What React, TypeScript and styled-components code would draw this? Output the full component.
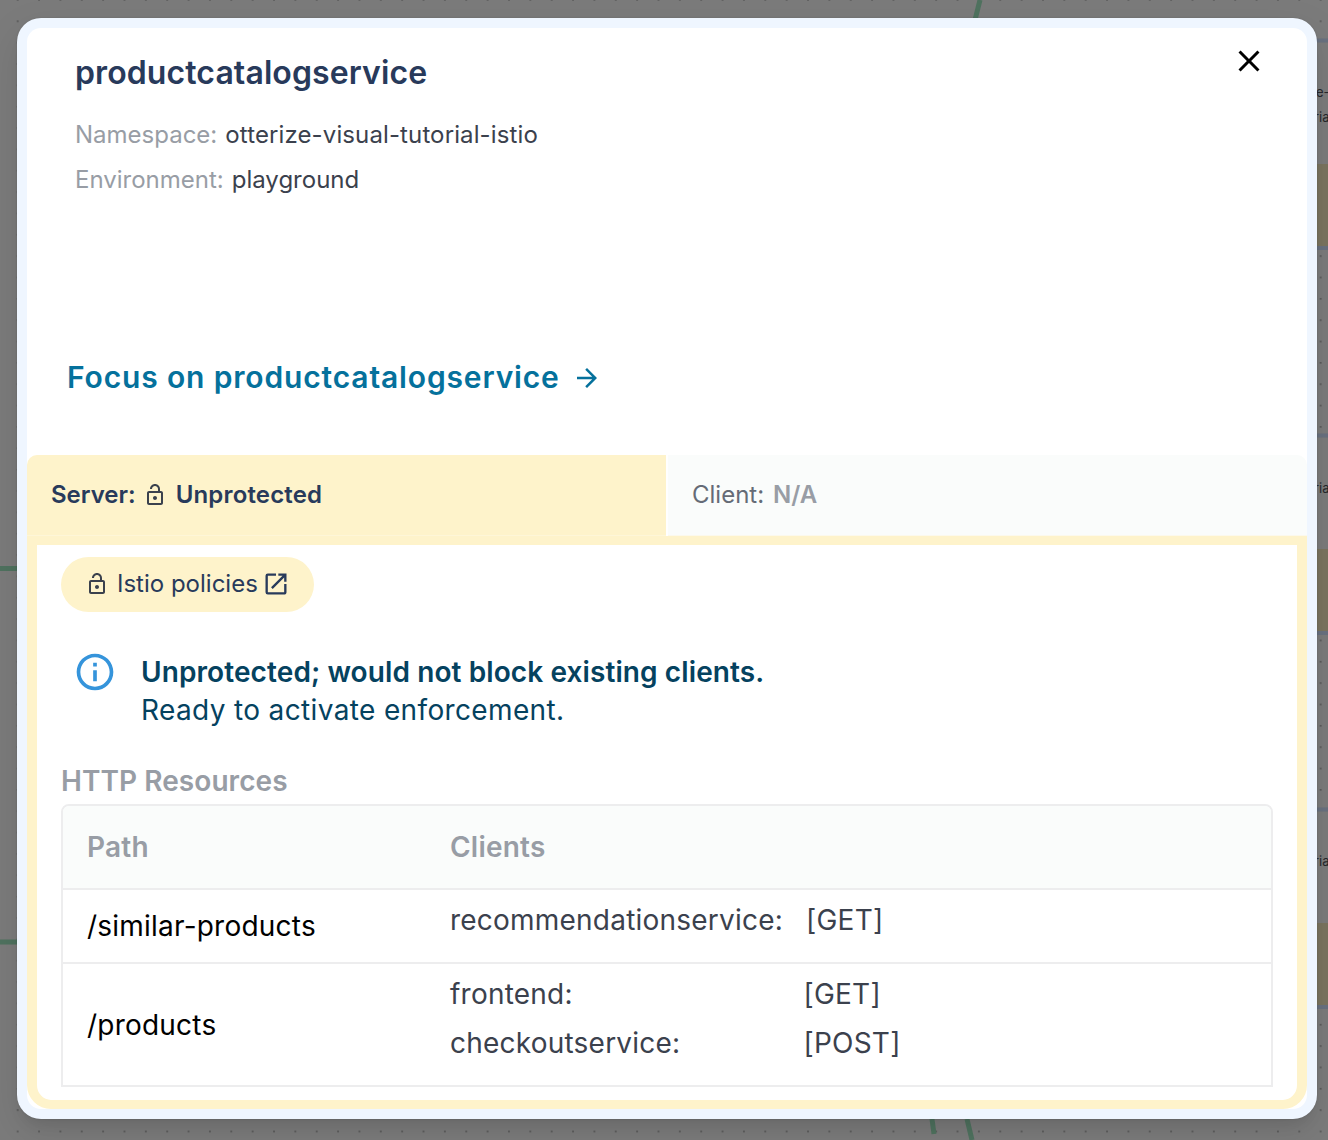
import React from "react";
import styled, { createGlobalStyle } from "styled-components";
import { MdArrowForward, MdClose, MdInfoOutline, MdOpenInNew, MdOutlineLockOpen } from "react-icons/md";

const GlobalStyle = createGlobalStyle`
  * { box-sizing: border-box; }
  body { margin: 0; overflow: hidden; font-family: Inter, "Liberation Sans", sans-serif; }
`;

const Screen = styled.div`
  position: relative;
  width: 1328px;
  height: 1140px;
  padding: 18px 11px 0 17px;
  overflow: hidden;
  background-color: #7b7b7b;
`;

const Canvas = styled.svg`
  position: absolute;
  inset: 0;
`;

const Dialog = styled.main`
  position: relative;
  height: 1101px;
  padding: 10px;
  border-radius: 24px;
  background: #eff6ff;
  box-shadow: 0 11px 15px -7px rgba(0, 0, 0, 0.1), 0 14px 38px 3px rgba(0, 0, 0, 0.08), 0 0 2px rgba(0, 0, 0, 0.15);
`;

const Sheet = styled.div`
  display: flex;
  flex-direction: column;
  height: 1081px;
  border-radius: 14px;
  background: #fff;
  overflow: hidden;
`;

const Header = styled.header`
  display: flex;
  justify-content: space-between;
  height: 427px;
  padding: 0 40px 0 40px;
`;

const Summary = styled.div`
  padding-top: 25px;
`;

const Title = styled.h1`
  margin: 0 0 19px 8px;
  font-size: 32px;
  line-height: 40px;
  font-weight: 600;
  letter-spacing: 0.1px;
  color: #283a5b;
`;

const Meta = styled.div`
  display: flex;
  gap: 8px;
  margin-left: 8px;
  font-size: 24px;
  line-height: 45px;
  color: #3b414d;
`;

const MetaLabel = styled.span`
  color: #989da5;
`;

const MetaValue = styled.span<{ $tracking: number }>`
  letter-spacing: ${(p) => p.$tracking}px;
`;

const FocusLink = styled.a`
  display: flex;
  align-items: center;
  gap: 12px;
  margin-top: 156px;
  font-size: 30px;
  line-height: 40px;
  font-weight: 600;
  letter-spacing: 0.85px;
  color: #05719c;
`;

const FocusLabel = styled.span`
  margin: -1px 0 1px;
`;

const CloseButton = styled.button`
  display: flex;
  height: 36px;
  margin: 15px 0 0;
  padding: 0;
  border: 0;
  background: none;
  color: #000;
`;

const Tabs = styled.nav`
  display: grid;
  grid-template-columns: 639px 1fr;
  gap: 2px;
  height: 81px;
`;

const Tab = styled.div<{ $active?: boolean }>`
  display: flex;
  align-items: center;
  padding: 0 24px 1px;
  border-bottom: 1px solid ${(p) => (p.$active ? "#fef6d8" : "#fcf9ec")};
  border-radius: ${(p) => (p.$active ? "10px 0 0 0" : "0 10px 0 0")};
  background: ${(p) => (p.$active ? "#fef3cb" : "#fafcfb")};
  font-size: 24px;
  font-weight: ${(p) => (p.$active ? 600 : 400)};
  color: ${(p) => (p.$active ? "#283a5b" : "#656b76")};
`;

const Status = styled.span`
  letter-spacing: 0.15px;
`;

const Muted = styled.strong`
  margin-left: 9px;
  font-weight: 600;
  color: #989da5;
`;

const TabIcon = styled.span`
  display: flex;
  margin: 0 9px 0 7px;
  color: #3b414d;
`;

const Panel = styled.section`
  flex: 1;
  padding: 12px 24px 0;
  border: 9px solid #fef3cb;
  border-left-width: 10px;
  border-right-width: 10px;
  border-radius: 0 0 24px 24px;
`;

const PolicyChip = styled.a`
  display: flex;
  align-items: center;
  width: 253px;
  height: 55px;
  padding: 0 24px 1px;
  border-radius: 28px;
  background: #fef3cb;
  font-size: 24px;
  color: #283a5b;
`;

const ChipLabel = styled.span`
  margin: -1px 4px 0 8px;
`;

const Notice = styled.div`
  display: flex;
  gap: 24px;
  margin: 41px 0 0 12px;
  color: #05425f;
  font-size: 28px;
  line-height: 38px;
`;

const NoticeIcon = styled.span`
  display: flex;
  height: 44px;
  margin-top: -3px;
  color: #3594db;
`;

const NoticeTitle = styled.div`
  font-weight: 600;
  letter-spacing: 0.1px;
`;

const NoticeText = styled.div`
  letter-spacing: 0.36px;
`;

const SectionTitle = styled.h2`
  margin: 32px 0 3px;
  font-size: 28px;
  line-height: 40px;
  font-weight: 600;
  letter-spacing: 0.06px;
  color: #989da5;
`;

const Table = styled.div`
  border: 2px solid #ededee;
  border-radius: 8px 8px 0 0;
  overflow: hidden;
`;

const Row = styled.div<{ $height: number; $head?: boolean }>`
  display: grid;
  grid-template-columns: 363px 1fr;
  height: ${(p) => p.$height}px;
  padding-left: 24px;
  font-size: 28px;
  letter-spacing: 0.22px;
  ${(p) => (p.$head
    ? "align-items: center; background: #fafcfb; color: #989da5; font-weight: 600;"
    : "border-top: 2px solid #ededee; color: #3b414d;")}
`;

const Path = styled.div`
  align-self: center;
  color: #000;
`;

const Clients = styled.div`
  padding-top: 6px;
`;

const ClientRow = styled.div`
  display: flex;
  gap: 23px;
  line-height: 49px;
`;

const ClientName = styled.span`
  min-width: 330.5px;
`;

interface Resource {
  path: string;
  height: number;
  clients: [string, string][];
}

const resources: Resource[] = [
  { path: "/similar-products", height: 74, clients: [["recommendationservice:", "[GET]"]] },
  { path: "/products", height: 123, clients: [["frontend:", "[GET]"], ["checkoutservice:", "[POST]"]] },
];

function MetaRow({ label, value, tracking = 0 }: { label: string; value: string; tracking?: number }) {
  return (
    <Meta>
      <MetaLabel>{label}</MetaLabel>
      <MetaValue $tracking={tracking}>{value}</MetaValue>
    </Meta>
  );
}

function GraphBackground() {
  return (
    <Canvas width="1328" height="1140">
      <defs>
        <pattern id="dots" x="7" y="10.7" width="21.36" height="21.35" patternUnits="userSpaceOnUse">
          <circle cx="10.7" cy="10.6" r="0.8" fill="#454545" />
        </pattern>
      </defs>
      <rect width="1328" height="1140" fill="url(#dots)" />
      <g stroke="#4f725f" strokeWidth="5" fill="none">
        <path d="M980 0L975 20M0 568.5H17M0 942H17M932 1119L934 1134M967 1119L972 1140" />
      </g>
      {[40, 435, 809].map((y, i) => {
        const top = [164, 549, 923][i];
        return (
          <g key={y}>
            <rect x="1300" y={y} width="28" height={top - y + 84} fill="#7b7b7b" />
            <rect x="1300" y={top} width="28" height="82" fill="#7a745f" />
            <path d={`M1300 ${y + 0.5}H1328M1300 ${top + 84}H1328`} stroke="#69717f" strokeWidth="4" />
          </g>
        );
      })}
      <g fontSize="13" fill="#26282c">
        <text x="1316" y="97">e-</text>
        <text x="1314" y="122">ria</text>
        <text x="1314" y="493">ria</text>
        <text x="1314" y="866">ria</text>
      </g>
    </Canvas>
  );
}

export default function App() {
  return (
    <Screen>
      <GlobalStyle />
      <GraphBackground />
      <Dialog>
        <Sheet>
          <Header>
            <Summary>
              <Title>productcatalogservice</Title>
              <MetaRow label="Namespace:" value="otterize-visual-tutorial-istio" tracking={0.12} />
              <MetaRow label="Environment:" value="playground" />
              <FocusLink>
                <FocusLabel>Focus on productcatalogservice</FocusLabel>
                <MdArrowForward size={30} />
              </FocusLink>
            </Summary>
            <CloseButton aria-label="Close"><MdClose size={36} /></CloseButton>
          </Header>
          <Tabs>
            <Tab $active>
              Server:
              <TabIcon><MdOutlineLockOpen size={24} /></TabIcon>
              <Status>Unprotected</Status>
            </Tab>
            <Tab>Client:<Muted>N/A</Muted></Tab>
          </Tabs>
          <Panel>
            <PolicyChip>
              <MdOutlineLockOpen size={24} color="#3b414d" />
              <ChipLabel>Istio policies</ChipLabel>
              <MdOpenInNew size={28} />
            </PolicyChip>
            <Notice>
              <NoticeIcon><MdInfoOutline size={44} /></NoticeIcon>
              <div>
                <NoticeTitle>Unprotected; would not block existing clients.</NoticeTitle>
                <NoticeText>Ready to activate enforcement.</NoticeText>
              </div>
            </Notice>
            <SectionTitle>HTTP Resources</SectionTitle>
            <Table>
              <Row $height={82} $head><span>Path</span><span>Clients</span></Row>
              {resources.map((r) => (
                <Row key={r.path} $height={r.height}>
                  <Path>{r.path}</Path>
                  <Clients>
                    {r.clients.map(([name, method]) => (
                      <ClientRow key={name}><ClientName>{name}</ClientName><span>{method}</span></ClientRow>
                    ))}
                  </Clients>
                </Row>
              ))}
            </Table>
          </Panel>
        </Sheet>
      </Dialog>
    </Screen>
  );
}
